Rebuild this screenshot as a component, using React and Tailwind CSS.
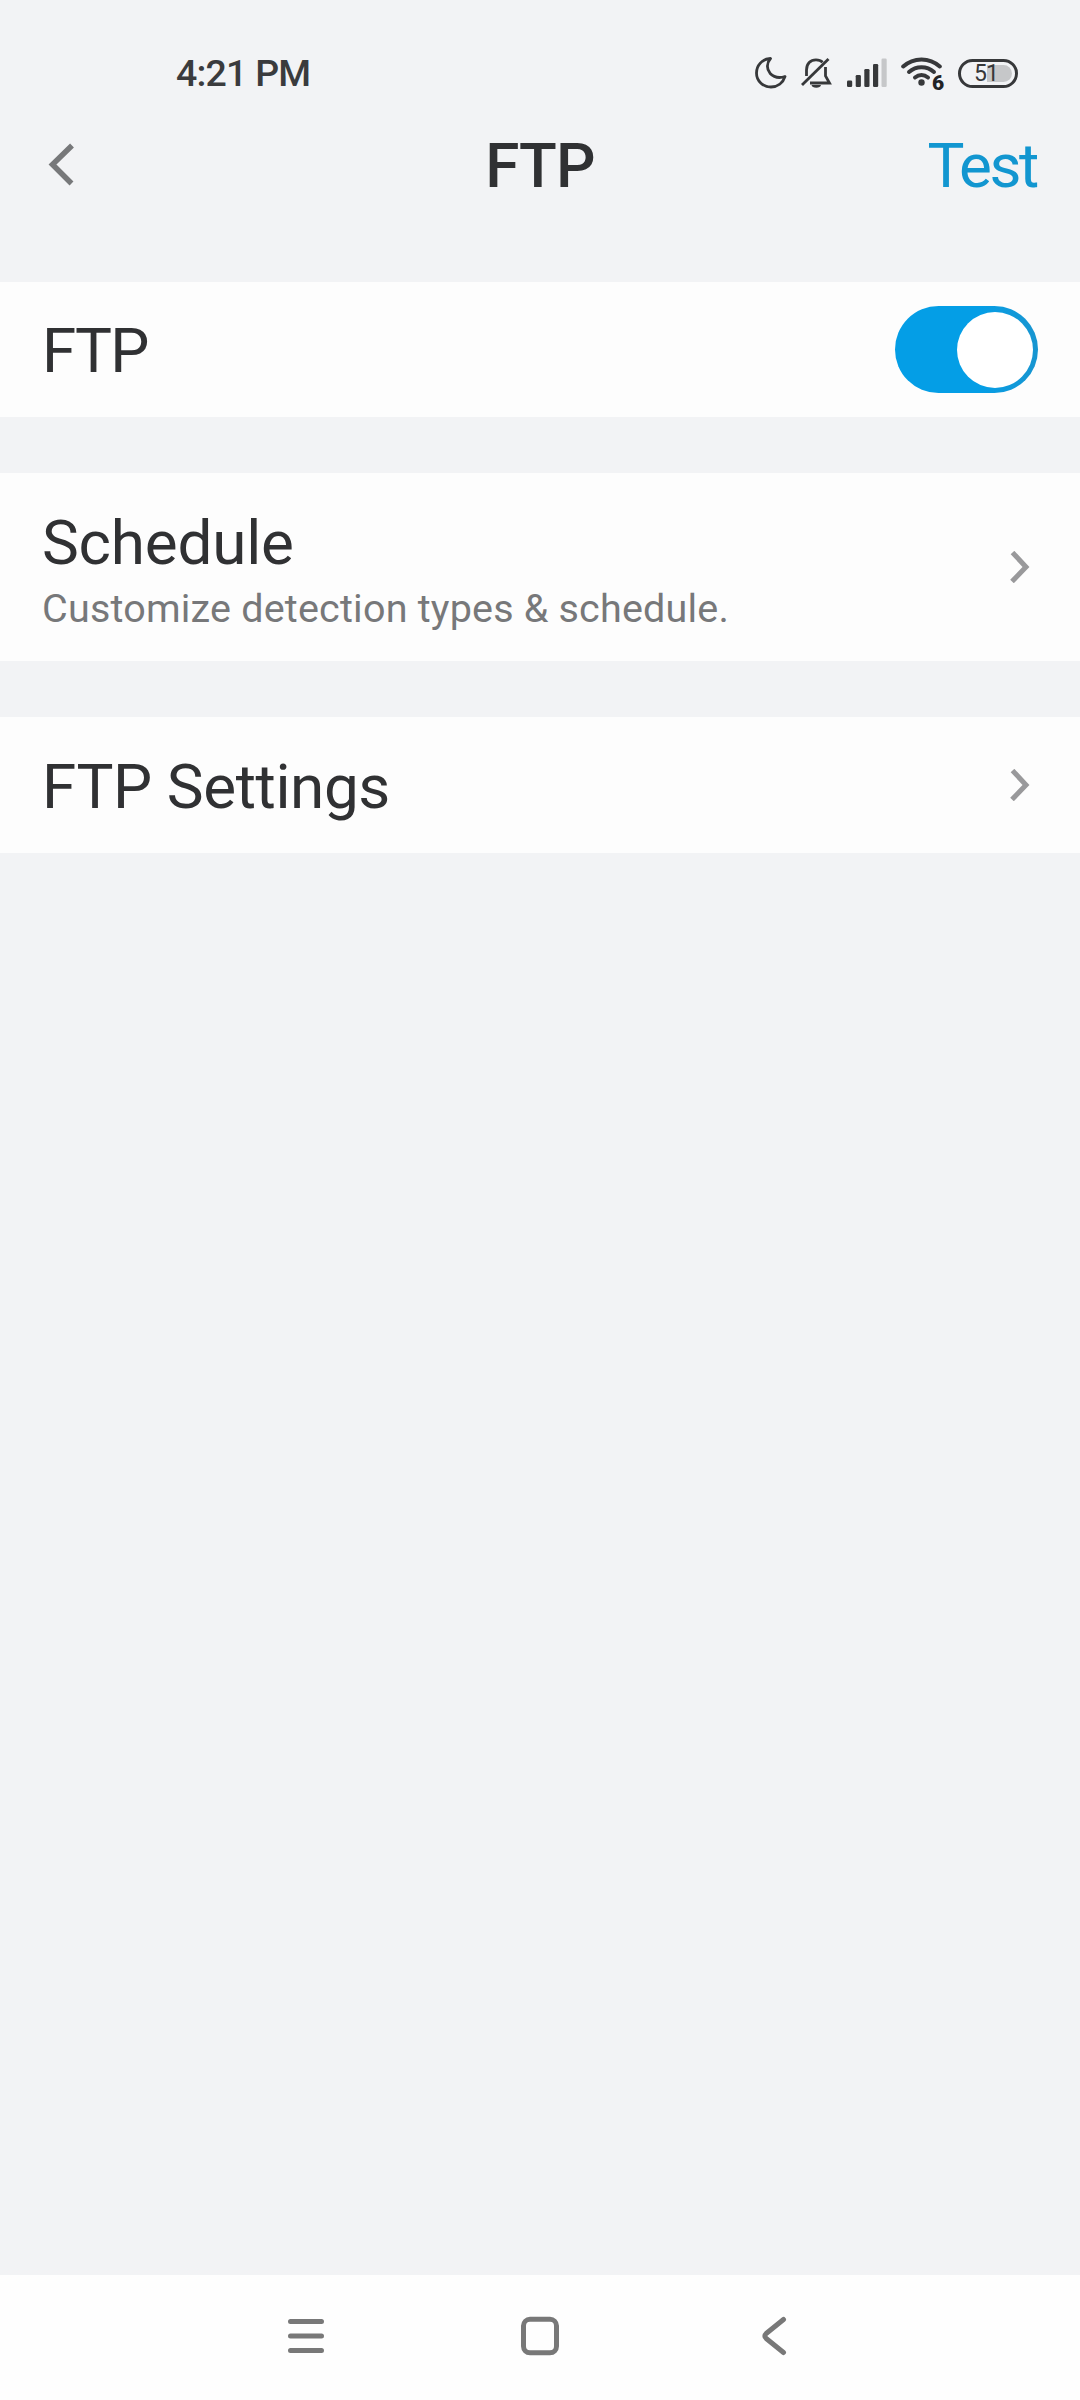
import { useState } from "react";

function StatusBar() {
  return (
    <div className="flex h-[106px] items-end pr-[62px] pl-[176px]">
      <span className="text-[37.5px] leading-[66px] font-medium tracking-[-0.8px] text-[#3a3b3d]">
        4:21 PM
      </span>

      <div className="ml-auto flex h-[66px] items-center text-[#37383a]">
        {/* Do not disturb */}
        <svg className="mr-[13px] h-8 w-8" viewBox="0 0 32 32" fill="none">
          <path
            d="M15.5 1.5C7 2 1.5 8.5 1.5 16C1.5 24 8 30 16 30C22.5 30 28 26 30 19.5C24 21.5 18.5 20 15 16.2C11.5 12 11.5 6 15.5 1.5Z"
            stroke="currentColor"
            strokeWidth="2.8"
            strokeLinejoin="round"
          />
        </svg>

        {/* Muted bell */}
        <svg className="mr-[15px] h-8 w-8" viewBox="0 0 32 32" fill="none">
          <path
            d="M6.5 19V13C6.5 6.5 10.5 2.8 16 2.8c2.8 0 5 .8 6.6 2.4M25.5 10v9l4 7H10"
            stroke="currentColor"
            strokeWidth="2.8"
          />
          <path d="M2 28L28.5 2" stroke="currentColor" strokeWidth="2.8" />
          <path d="M11.5 28h9.5a4.8 3.2 0 0 1-9.5 0z" fill="currentColor" />
        </svg>

        {/* Signal */}
        <svg className="mr-[14px] h-8 w-10" viewBox="0 0 40 32">
          <rect x="0" y="23.5" width="5.2" height="6.5" rx="1.3" fill="currentColor" />
          <rect x="8.7" y="18" width="5.2" height="12" rx="1.3" fill="currentColor" />
          <rect x="17.3" y="12" width="5.2" height="18" rx="1.3" fill="currentColor" />
          <rect x="26" y="7" width="5.2" height="23" rx="1.3" fill="currentColor" />
          <rect x="34.5" y="1.5" width="5.2" height="28.5" rx="1.3" fill="#c6c7c9" />
        </svg>

        {/* Wi-Fi 6 */}
        <div className="relative mr-[14px] h-9 w-[43px]">
          <svg className="h-9 w-[43px]" viewBox="0 0 43 36" fill="none">
            <g stroke="currentColor" strokeWidth="4" strokeLinecap="round">
              <path d="M2.2 11.5C12.5 2 28.5 2 38.8 11.5" />
              <path d="M8 17C15.2 10.5 25.8 10.5 33 17" />
              <path d="M14 22.5C18 19.3 23 19.3 27 22.5" />
            </g>
            <circle cx="20.5" cy="27.5" r="3.2" fill="currentColor" />
          </svg>
          <span className="absolute top-[17px] left-[31px] text-[21px] leading-[22px] font-black text-[#222325]">
            6
          </span>
        </div>

        {/* Battery */}
        <div className="relative flex h-[29px] w-[60px] items-center rounded-full border-3 border-[#37383a] p-[3px]">
          <div className="ml-auto h-[17px] w-[25px] rounded-r-full bg-[#c6c7c9]" />
          <span className="absolute left-[13px] text-[23px] leading-none tracking-[-1px]">
            51
          </span>
        </div>
      </div>
    </div>
  );
}

function Header() {
  return (
    <div className="grid h-[176px] grid-cols-3 px-[42px] pt-[17px]">
      <button className="flex h-[84px] items-center pl-[6px]">
        <svg className="h-11 w-7" viewBox="0 0 28 44" fill="none">
          <path d="M24 2.5L4.5 21.5L23.5 40.5" stroke="#77787a" strokeWidth="5.5" />
        </svg>
      </button>
      <h1 className="h-[84px] pt-px text-center text-[62px] leading-[84px] font-medium tracking-[-0.8px] text-[#303133]">
        FTP
      </h1>
      <button className="h-[84px] pt-px pr-px text-right text-[62px] leading-[84px] tracking-[-2.4px] text-[#1296d0]">
        Test
      </button>
    </div>
  );
}

function Toggle({ on, onChange }) {
  return (
    <button
      onClick={() => onChange(!on)}
      className={`flex h-[87px] w-[143px] items-center rounded-full px-[5px] ${
        on
          ? "justify-end bg-linear-to-r from-[#049ee6] from-60% to-[#1795d0]"
          : "justify-start bg-[#d0d2d6]"
      }`}
    >
      <span className="h-[76px] w-[76px] rounded-full bg-white" />
    </button>
  );
}

function RowChevron() {
  return (
    <svg className="h-8 w-5" viewBox="0 0 20 32" fill="none">
      <path d="M2.5 1.5L16 16L2 30.5" stroke="#99999b" strokeWidth="5" />
    </svg>
  );
}

export default function App() {
  const [enabled, setEnabled] = useState(true);

  return (
    <div className="flex h-[2400px] w-[1080px] flex-col bg-[#f2f3f5] font-[Roboto,sans-serif] text-[#303133]">
      <StatusBar />
      <Header />

      <div className="flex flex-col gap-14">
        <div className="flex h-[135px] items-center justify-between bg-[#fdfdfd] px-[42px]">
          <span className="pt-[2px] text-[62px] leading-none tracking-[-1.8px]">FTP</span>
          <Toggle on={enabled} onChange={setEnabled} />
        </div>

        <div className="flex h-[188px] items-center justify-between bg-[#fdfdfd] pr-[50px] pl-[42px]">
          <div className="pt-[10px]">
            <h2 className="text-[62px] leading-[62px] tracking-[-0.2px]">Schedule</h2>
            <p className="mt-[11px] text-[39.5px] leading-[48px] tracking-[0.2px] text-[#77787a]">
              Customize detection types & schedule.
            </p>
          </div>
          <RowChevron />
        </div>

        <div className="flex h-[136px] items-center justify-between bg-[#fdfdfd] pr-[50px] pl-[42px]">
          <span className="pt-[4px] text-[62px] leading-none tracking-[-0.4px]">
            FTP Settings
          </span>
          <RowChevron />
        </div>
      </div>

      {/* System navigation */}
      <div className="mt-auto flex h-[125px] items-center justify-between bg-[#fefefe] pr-[293px] pb-[3px] pl-[287px]">
        <svg className="h-10 w-[38px]" viewBox="0 0 38 40" fill="none">
          <path
            d="M3.5 5.5h31M3.5 20h31M3.5 34.5h31"
            stroke="#787878"
            strokeWidth="5"
            strokeLinecap="round"
          />
        </svg>
        <svg className="mr-[7px] h-10 w-10" viewBox="0 0 40 40" fill="none">
          <rect x="3.5" y="3.3" width="33" height="33.5" rx="6.5" stroke="#787878" strokeWidth="5" />
        </svg>
        <svg className="h-10 w-[26px]" viewBox="0 0 26 40" fill="none">
          <path
            d="M22.5 3.5L5.2 17.5Q2.5 20 5.2 22.5L22.5 36.5"
            stroke="#787878"
            strokeWidth="5"
            strokeLinecap="round"
            strokeLinejoin="round"
          />
        </svg>
      </div>
    </div>
  );
}
